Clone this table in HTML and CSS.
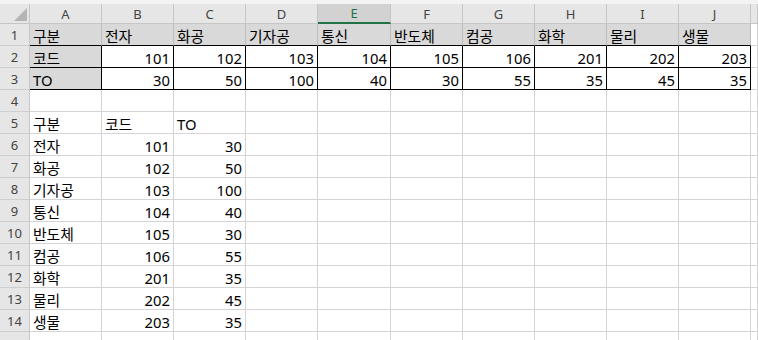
FILE: index.html
```html
<!DOCTYPE html>
<html lang="ko">
<head>
<meta charset="utf-8">
<title>Sheet1</title>
<link rel="stylesheet" href="styles.css">
</head>
<body>
<div class="sheet">
  <div class="topline"></div>
  <div class="grid">
    <!-- column headers -->
    <div class="corner"><svg width="30" height="20" viewBox="0 0 30 20"><polygon points="27,4 27,17 14,17" fill="#b4b4b4"/></svg></div>
    <div class="ch">A</div><div class="ch">B</div><div class="ch">C</div><div class="ch">D</div>
    <div class="ch sel">E</div><div class="ch">F</div><div class="ch">G</div><div class="ch">H</div>
    <div class="ch">I</div><div class="ch">J</div><div class="ch"></div>

    <!-- row 1 -->
    <div class="rh">1</div>
    <div class="c fill top">구분</div><div class="c fill top">전자</div><div class="c fill top">화공</div>
    <div class="c fill top">기자공</div><div class="c fill top">통신</div><div class="c fill top">반도체</div>
    <div class="c fill top">컴공</div><div class="c fill top">화학</div><div class="c fill top">물리</div>
    <div class="c fill top">생물</div><div class="c"></div>

    <!-- row 2 -->
    <div class="rh">2</div>
    <div class="c fill bk">코드</div><div class="c bk n">101</div><div class="c bk n">102</div>
    <div class="c bk n">103</div><div class="c bk n">104</div><div class="c bk n">105</div>
    <div class="c bk n">106</div><div class="c bk n">201</div><div class="c bk n">202</div>
    <div class="c bk n">203</div><div class="c"></div>

    <!-- row 3 -->
    <div class="rh">3</div>
    <div class="c fill bk">TO</div><div class="c bk n">30</div><div class="c bk n">50</div>
    <div class="c bk n">100</div><div class="c bk n">40</div><div class="c bk n">30</div>
    <div class="c bk n">55</div><div class="c bk n">35</div><div class="c bk n">45</div>
    <div class="c bk n">35</div><div class="c"></div>

    <!-- row 4 -->
    <div class="rh">4</div>
    <div class="c"></div><div class="c"></div><div class="c"></div><div class="c"></div><div class="c"></div>
    <div class="c"></div><div class="c"></div><div class="c"></div><div class="c"></div><div class="c"></div><div class="c"></div>

    <!-- row 5 -->
    <div class="rh">5</div>
    <div class="c">구분</div><div class="c">코드</div><div class="c">TO</div><div class="c"></div><div class="c"></div>
    <div class="c"></div><div class="c"></div><div class="c"></div><div class="c"></div><div class="c"></div><div class="c"></div>

    <!-- rows 6-14 -->
    <div class="rh">6</div>
    <div class="c">전자</div><div class="c n">101</div><div class="c n">30</div><div class="c"></div><div class="c"></div>
    <div class="c"></div><div class="c"></div><div class="c"></div><div class="c"></div><div class="c"></div><div class="c"></div>

    <div class="rh">7</div>
    <div class="c">화공</div><div class="c n">102</div><div class="c n">50</div><div class="c"></div><div class="c"></div>
    <div class="c"></div><div class="c"></div><div class="c"></div><div class="c"></div><div class="c"></div><div class="c"></div>

    <div class="rh">8</div>
    <div class="c">기자공</div><div class="c n">103</div><div class="c n">100</div><div class="c"></div><div class="c"></div>
    <div class="c"></div><div class="c"></div><div class="c"></div><div class="c"></div><div class="c"></div><div class="c"></div>

    <div class="rh">9</div>
    <div class="c">통신</div><div class="c n">104</div><div class="c n">40</div><div class="c"></div><div class="c"></div>
    <div class="c"></div><div class="c"></div><div class="c"></div><div class="c"></div><div class="c"></div><div class="c"></div>

    <div class="rh">10</div>
    <div class="c">반도체</div><div class="c n">105</div><div class="c n">30</div><div class="c"></div><div class="c"></div>
    <div class="c"></div><div class="c"></div><div class="c"></div><div class="c"></div><div class="c"></div><div class="c"></div>

    <div class="rh">11</div>
    <div class="c">컴공</div><div class="c n">106</div><div class="c n">55</div><div class="c"></div><div class="c"></div>
    <div class="c"></div><div class="c"></div><div class="c"></div><div class="c"></div><div class="c"></div><div class="c"></div>

    <div class="rh">12</div>
    <div class="c">화학</div><div class="c n">201</div><div class="c n">35</div><div class="c"></div><div class="c"></div>
    <div class="c"></div><div class="c"></div><div class="c"></div><div class="c"></div><div class="c"></div><div class="c"></div>

    <div class="rh">13</div>
    <div class="c">물리</div><div class="c n">202</div><div class="c n">45</div><div class="c"></div><div class="c"></div>
    <div class="c"></div><div class="c"></div><div class="c"></div><div class="c"></div><div class="c"></div><div class="c"></div>

    <div class="rh">14</div>
    <div class="c">생물</div><div class="c n">203</div><div class="c n">35</div><div class="c"></div><div class="c"></div>
    <div class="c"></div><div class="c"></div><div class="c"></div><div class="c"></div><div class="c"></div><div class="c"></div>

    <!-- row 15 (only its top edge is in view) -->
    <div class="rh"></div>
    <div class="c"></div><div class="c"></div><div class="c"></div><div class="c"></div><div class="c"></div>
    <div class="c"></div><div class="c"></div><div class="c"></div><div class="c"></div><div class="c"></div><div class="c"></div>
  </div>
</div>
</body>
</html>
```

FILE: styles.css
```css
html, body {
  margin: 0;
  padding: 0;
  background: #ffffff;
}

.sheet {
  width: 758px;
  height: 340px;
  overflow: hidden;
  font-family: "Noto Sans", "Noto Sans CJK KR", sans-serif;
}

.topline {
  height: 4px;
  background: #f3f3f3;
}

.grid {
  display: grid;
  grid-template-columns: 30px 72px 72px 72px 72px 73px 72px 72px 72px 72px 72px 1fr;
  grid-template-rows: 20px repeat(15, 22px);
}

.grid > div {
  box-sizing: border-box;
}

/* header strip */
.corner {
  background: #e6e6e6;
  border-right: 1px solid #c6c6c6;
  border-bottom: 1px solid #c6c6c6;
  line-height: 0;
}

.ch {
  background: #e6e6e6;
  border-right: 1px solid #c6c6c6;
  border-bottom: 1px solid #c6c6c6;
  color: #444444;
  font-size: 13px;
  padding-top: 1px;
  line-height: 18px;
  text-align: center;
}

.ch.sel {
  background: #d2d2d2;
  color: #217346;
  border-bottom: 2px solid #217346;
  line-height: 17px;
}

.rh {
  background: #e6e6e6;
  border-right: 1px solid #c6c6c6;
  border-bottom: 1px solid #cfcfcf;
  color: #444444;
  font-size: 13px;
  padding-top: 1px;
  line-height: 20px;
  text-align: center;
}

/* cells */
.c {
  border-right: 1px solid #d4d4d4;
  border-bottom: 1px solid #d4d4d4;
  color: #000000;
  font-size: 14.8px;
  padding: 3px 3px 0;
  line-height: 18px;
  white-space: nowrap;
  overflow: hidden;
}

.c.n {
  text-align: right;
}

.c.fill {
  background: #d9d9d9;
}

.c.top {
  border-right-color: #bdbdbd;
  border-bottom-color: #000000;
}

.c.bk {
  border-right-color: #000000;
  border-bottom-color: #000000;
}
```
